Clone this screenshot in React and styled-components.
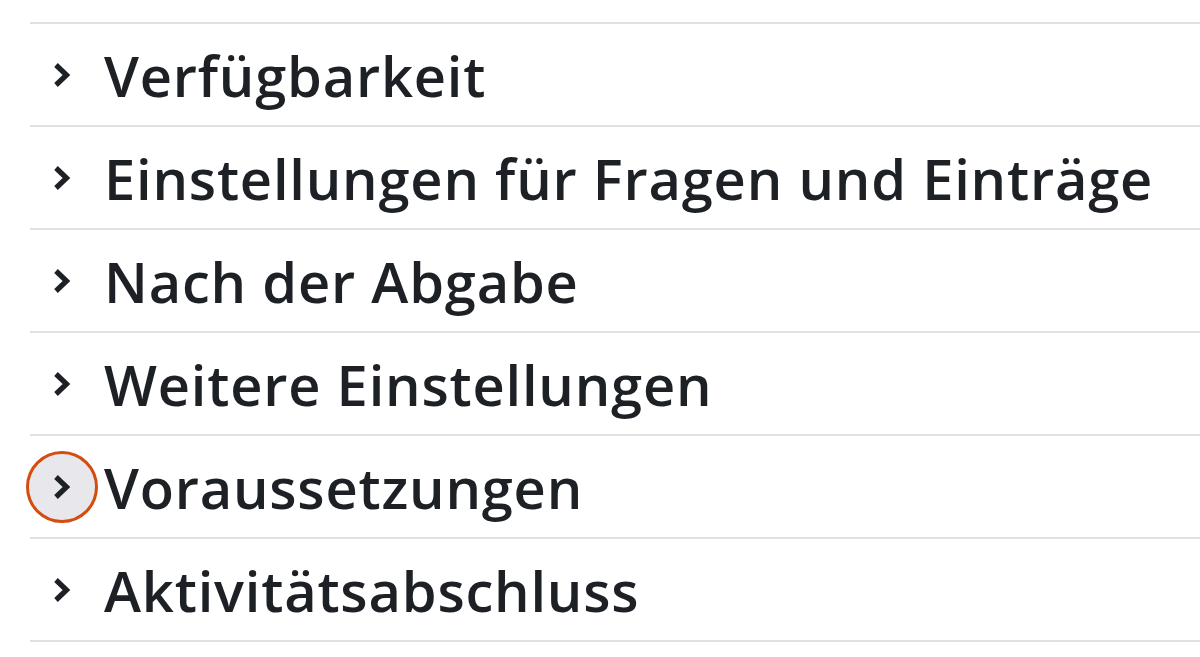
import React from 'react'
import styled, { createGlobalStyle } from 'styled-components'

const GlobalStyle = createGlobalStyle`
  html, body {
    margin: 0;
    padding: 0;
    background: #ffffff;
  }
  body {
    font-family: "Open Sans", "Noto Sans", "Liberation Sans", sans-serif;
    color: #1d2125;
  }
`

const Page = styled.div`
  width: 1200px;
  height: 657px;
  overflow: hidden;
  padding-top: 22px;
  box-sizing: border-box;
`

const Accordion = styled.div`
  margin-left: 30px;
  border-bottom: 2px solid #dee2e6;
`

const Section = styled.div`
  display: flex;
  align-items: center;
  height: 101px;
  border-top: 2px solid #dee2e6;
`

const ToggleButton = styled.button`
  display: flex;
  align-items: center;
  justify-content: center;
  flex: none;
  width: 72px;
  height: 72px;
  margin-left: -4px;
  padding: 0;
  border-radius: 50%;
  border: 3px solid ${p => (p.$focused ? '#d44c10' : 'transparent')};
  background: ${p => (p.$focused ? '#e8e8ec' : 'transparent')};
  color: #1d2125;
  cursor: pointer;
  box-sizing: border-box;

  svg {
    width: 20px;
    height: 26px;
  }
`

const Title = styled.h3`
  margin: 0 0 0 6px;
  font-size: 56px;
  font-weight: 600;
  line-height: 1;
  letter-spacing: 0.8px;
  color: #1d2125;
`

const Chevron = () => (
  <svg viewBox="0 0 20 26" fill="none">
    <polyline
      points="4,3 14.5,13 4,23"
      stroke="currentColor"
      strokeWidth="5.2"
      strokeLinejoin="miter"
      strokeLinecap="butt"
    />
  </svg>
)

const sections = [
  { title: 'Verfügbarkeit' },
  { title: 'Einstellungen für Fragen und Einträge' },
  { title: 'Nach der Abgabe' },
  { title: 'Weitere Einstellungen' },
  { title: 'Voraussetzungen', focused: true },
  { title: 'Aktivitätsabschluss' }
]

const App = () => {
  return (
    <>
      <GlobalStyle />
      <Page>
        <Accordion>
          {sections.map(section => (
            <Section key={section.title}>
              <ToggleButton $focused={section.focused} aria-expanded='false'>
                <Chevron />
              </ToggleButton>
              <Title>{section.title}</Title>
            </Section>
          ))}
        </Accordion>
      </Page>
    </>
  )
}

export default App
